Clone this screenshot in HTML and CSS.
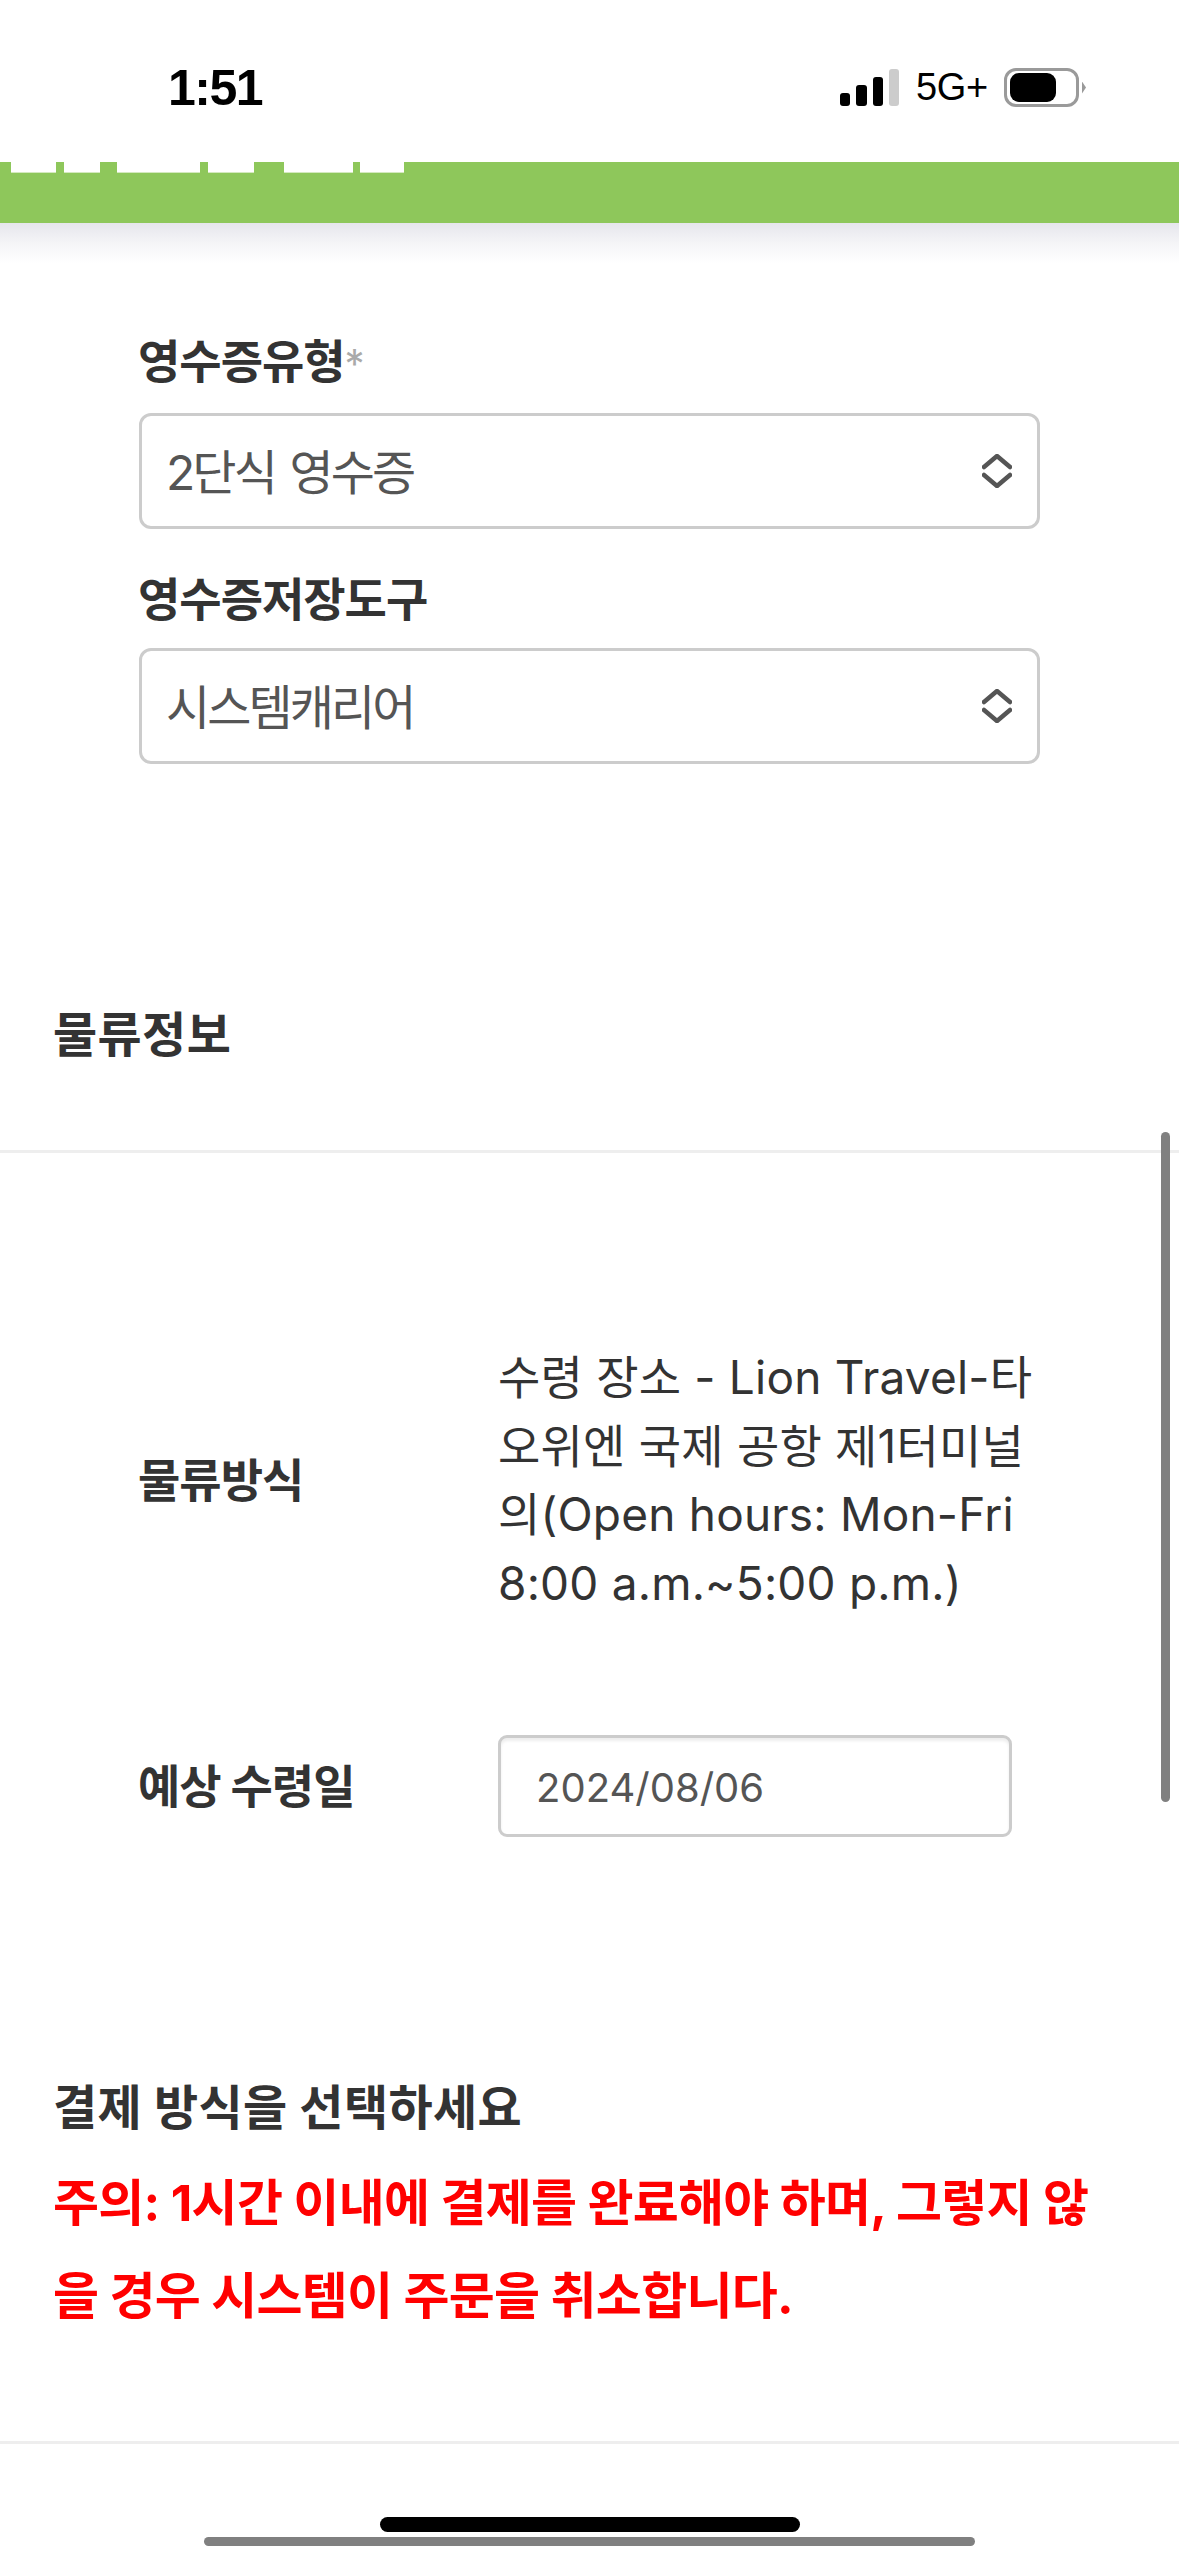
FILE: index.html
```html
<!DOCTYPE html>
<html lang="ko">
<head>
<meta charset="utf-8">
<title>영수증</title>
<link rel="stylesheet" href="styles.css">
</head>
<body>
<div class="phone">
  <header class="status">
    <span class="time">1:51</span>
    <div class="status-right">
      <div class="signal"><i class="b1"></i><i class="b2"></i><i class="b3"></i><i class="b4"></i></div>
      <span class="net">5G+</span>
      <div class="battery"><div class="battery-body"><div class="battery-fill"></div></div><div class="battery-nub"></div></div>
    </div>
  </header>
  <div class="brandbar">
    <i class="t1"></i><i class="t2"></i><i class="t3"></i><i class="t4"></i><i class="t5"></i><i class="t6"></i>
  </div>
  <div class="shade"></div>

  <section class="fields">
    <div class="field">
      <label class="label">영수증유형<span class="req">*</span></label>
      <div class="select"><span class="select-text">2단식 영수증</span>
        <svg class="chev" viewBox="0 0 30 34" width="30" height="34"><path d="M2 13 L15 2 L28 13 M2 21 L15 32 L28 21" fill="none" stroke="#555" stroke-width="4.5" stroke-linecap="round" stroke-linejoin="round"/></svg>
      </div>
    </div>
    <div class="field">
      <label class="label">영수증저장도구</label>
      <div class="select"><span class="select-text">시스템캐리어</span>
        <svg class="chev" viewBox="0 0 30 34" width="30" height="34"><path d="M2 13 L15 2 L28 13 M2 21 L15 32 L28 21" fill="none" stroke="#555" stroke-width="4.5" stroke-linecap="round" stroke-linejoin="round"/></svg>
      </div>
    </div>
  </section>

  <h2 class="section-title">물류정보</h2>
  <hr class="rule">

  <section class="rows">
    <div class="row">
      <div class="label">물류방식</div>
      <div class="value">수령 장소 - Lion Travel-타<br>오위엔 국제 공항 제1터미널<br>의(Open hours: Mon-Fri<br>8:00 a.m.~5:00 p.m.)</div>
    </div>
    <div class="row row-date">
      <div class="label">예상 수령일</div>
      <div class="date">2024/08/06</div>
    </div>
  </section>

  <section class="payment">
    <h2 class="section-title pay-title">결제 방식을 선택하세요</h2>
    <p class="warning">주의: 1시간 이내에 결제를 완료해야 하며, 그렇지 않<br>을 경우 시스템이 주문을 취소합니다.</p>
  </section>
  <hr class="rule rule-bottom">

  <div class="scrollbar"></div>
  <div class="home"></div>
  <div class="hscroll"></div>
</div>
</body>
</html>
```
FILE: styles.css
```css
* { box-sizing: border-box; }
html, body { margin: 0; padding: 0; background: #fff; }
body { font-family: Inter, "Noto Sans CJK KR", sans-serif; color: #333; }
.phone { position: relative; width: 1179px; height: 2556px; overflow: hidden; background: #fff; }

.status { height: 162px; display: flex; justify-content: space-between; padding: 62px 93px 0 168px; }
.time { font-family: "Liberation Sans", sans-serif; font-weight: 700; font-size: 50px; line-height: 52px; color: #000; letter-spacing: -1.5px; }
.status-right { display: flex; align-items: flex-start; padding-top: 7px; }
.signal { display: flex; align-items: flex-end; gap: 6px; height: 37px; width: 59px; }
.signal i { display: block; width: 10.5px; border-radius: 3px; background: #000; }
.signal .b1 { height: 13px; }
.signal .b2 { height: 21px; }
.signal .b3 { height: 29px; }
.signal .b4 { height: 37px; background: #ccc; }
.net { font-family: "Liberation Sans", sans-serif; font-size: 38px; line-height: 36px; color: #000; margin-left: 17px; width: 88px; letter-spacing: -0.4px; }
.battery { display: flex; align-items: center; height: 39px; margin-top: -1px; }
.battery-body { width: 75px; height: 39px; border: 3.5px solid #9a9a9a; border-radius: 12px; padding: 2px 3px; }
.battery-fill { width: 46px; height: 100%; background: #000; border-radius: 9px; }
.battery-nub { width: 4px; height: 12px; margin-left: 3px; background: #9a9a9a; clip-path: polygon(0 0, 100% 50%, 0 100%); }

.brandbar { height: 61px; background: #8ec75b; position: relative; }
.brandbar i { position: absolute; top: 0; height: 10px; background: #fff; box-shadow: 0 1px 0 #d4e9bf; }
.t1 { left: 11px; width: 45px; }
.t2 { left: 64px; width: 36px; }
.t3 { left: 117px; width: 83px; }
.t4 { left: 208px; width: 46px; }
.t5 { left: 284px; width: 69px; }
.t6 { left: 360px; width: 44px; }
.shade { height: 40px; background: linear-gradient(#e6e6ec, #f6f6f8 55%, #fff); }

.fields { padding: 67px 140px 0 138px; }
.field { margin-bottom: 39px; }
.label { display: block; font-weight: 700; font-size: 46px; line-height: 60px; color: #333; letter-spacing: -1px; }
.req { color: #aaa; font-weight: 400; font-size: 40px; letter-spacing: 0; }
.field .label { padding-top: 1px; margin-bottom: 19px; }
.select { height: 116px; width: 901px; margin-left: 1px; border: 3px solid #ccc; border-radius: 12px; padding: 0 25px; display: flex; align-items: center; justify-content: space-between; font-size: 48px; color: #555; letter-spacing: -2.9px; word-spacing: 4px; }
.select-text { margin-left: -1px; padding-bottom: 4px; }
.chev { display: block; flex: none; }

.section-title { margin: 0; padding-left: 53px; font-weight: 700; font-size: 48px; line-height: 60px; color: #333; letter-spacing: 0.4px; }
.fields + .section-title { margin-top: 241px; }
.rule { border: 0; height: 3px; margin: 85px 0 0; background: #eee; }

.rows { padding: 190px 0 0 138px; }
.row { display: flex; align-items: center; }
.row .label { width: 360px; flex: none; }
.value { font-size: 46px; line-height: 68.5px; color: #333; letter-spacing: 0.2px; }
.row-date { margin-top: 118px; }
.date { width: 514px; height: 102px; border: 3px solid #ccc; border-radius: 9px; box-shadow: inset 0 3px 3px #eee; padding: 2px 35px 0; display: flex; align-items: center; font-size: 40px; color: #555; }

.payment { padding-top: 241px; }
.warning { margin: 19px 0 0; padding-left: 53px; font-weight: 700; font-size: 50px; line-height: 93px; color: #f00; letter-spacing: -0.7px; }
.rule-bottom { margin-top: 98px; }

.scrollbar { position: absolute; left: 1161px; top: 1132px; width: 9px; height: 670px; background: #808080; border-radius: 5px; }
.home { position: absolute; left: 380px; top: 2517px; width: 420px; height: 15px; background: #000; border-radius: 8px; }
.hscroll { position: absolute; left: 204px; top: 2537px; width: 771px; height: 9px; background: #808080; border-radius: 5px; }
```
